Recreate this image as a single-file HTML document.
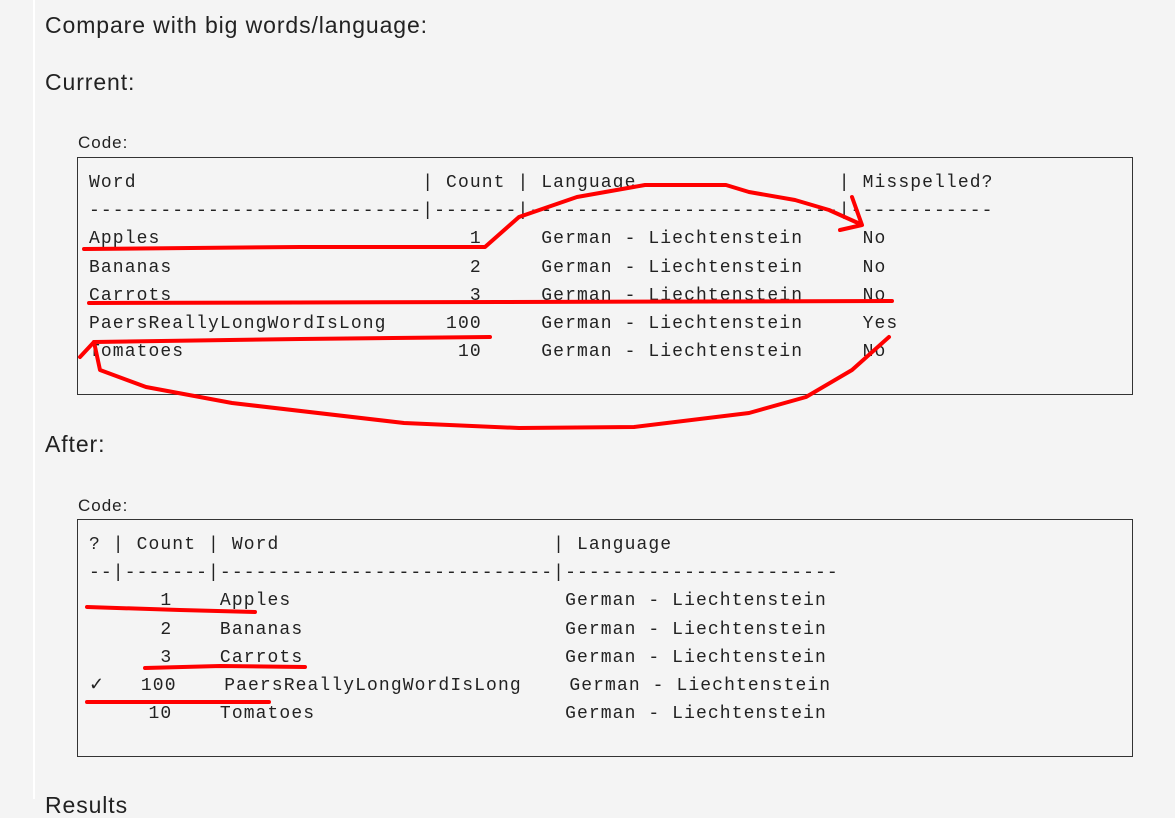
<!DOCTYPE html>
<html><head><meta charset="utf-8"><style>
body{margin:0;width:1175px;height:799px;background:#f4f4f4;position:relative;overflow:hidden;font-family:"Liberation Sans",sans-serif;color:#222}
.vl{position:absolute;left:33px;top:0;width:2px;height:799px;background:#fff}
.t{position:absolute;left:45px;font-size:23px;letter-spacing:0.9px;line-height:26px;white-space:nowrap}
.c{position:absolute;left:78px;font-size:17px;letter-spacing:1px;line-height:20px}
.box{position:absolute;left:77px;width:1054px;border:1.5px solid #333;background:#f4f4f4}
pre{position:absolute;left:89px;margin:0;font-family:"Liberation Mono",monospace;font-size:18px;letter-spacing:1.1px;line-height:28.2px;color:#222}
svg{position:absolute;left:0;top:0}
</style></head><body>
<div class="vl"></div>
<div class="t" style="top:12px">Compare with big words/language:</div>
<div class="t" style="top:69px">Current:</div>
<div class="c" style="top:133px">Code:</div>
<div class="box" style="top:157px;height:236px"></div>
<pre style="top:169px">Word                        | Count | Language                 | Misspelled?
----------------------------|-------|--------------------------|------------
Apples                          1     German - Liechtenstein     No
Bananas                         2     German - Liechtenstein     No
Carrots                         3     German - Liechtenstein     No
PaersReallyLongWordIsLong     100     German - Liechtenstein     Yes
Tomatoes                       10     German - Liechtenstein     No</pre>
<div class="t" style="top:431px">After:</div>
<div class="c" style="top:496px">Code:</div>
<div class="box" style="top:519px;height:236px"></div>
<pre style="top:531px">? | Count | Word                       | Language
--|-------|----------------------------|-----------------------
      1    Apples                       German - Liechtenstein
      2    Bananas                      German - Liechtenstein
      3    Carrots                      German - Liechtenstein
✓   100    PaersReallyLongWordIsLong    German - Liechtenstein
     10    Tomatoes                     German - Liechtenstein</pre>
<div class="t" style="top:792px">Results</div>
<svg width="1175" height="799" fill="none" stroke="#f00" stroke-width="4" stroke-linejoin="round" stroke-linecap="round">
<polyline points="84,249 300,247 485,247 519,217 577,197 645,185 726,185 749,192 795,200 829,210 858,223"/>
<polyline points="852,197 862,225 840,230"/>
<polyline points="89,303 500,302 892,301"/>
<polyline points="490,337 300,339 94,342 80,357"/>
<polyline points="94,342 100,370 146,387 232,403 404,423 519,428 634,427 749,413 806,397 852,370 889,337"/>
<polyline points="87,607 180,610 255,612"/>
<polyline points="145,668 220,666 305,667"/>
<polyline points="87,702 269,702"/>
</svg>
</body></html>
